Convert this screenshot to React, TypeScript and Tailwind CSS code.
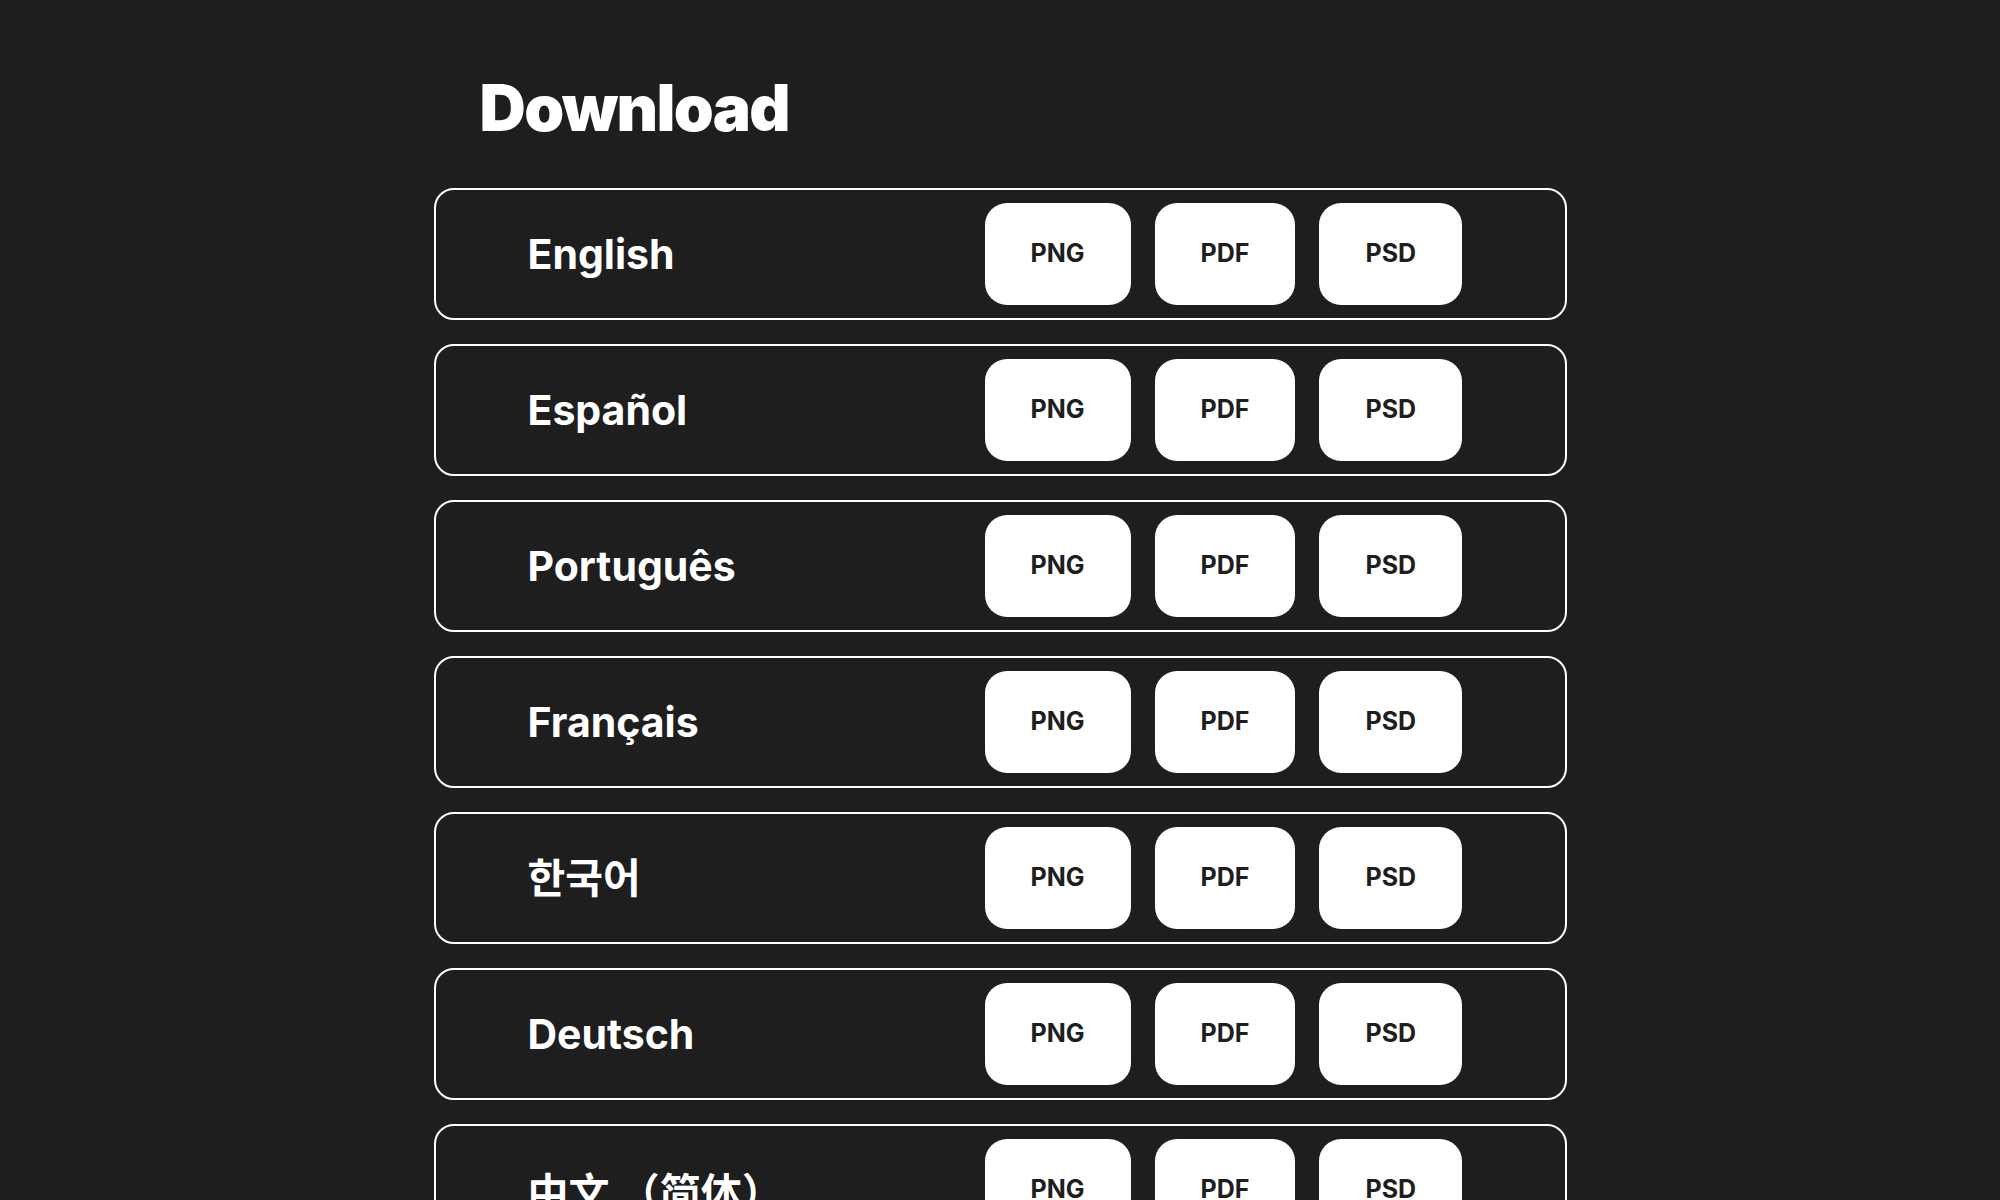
import React from "react";

const langs = ["English", "Español", "Português", "Français", "한국어", "Deutsch", "中文 （简体）", "日本語"];
const formats = ["PNG", "PDF", "PSD"];

export default function App() {
  return (
    <div
      className="min-h-screen w-full bg-[#1e1e1e] text-white"
      style={{ fontFamily: "Inter, 'Noto Sans CJK KR', 'Noto Sans CJK SC', sans-serif" }}
    >
      <div className="mx-auto w-[1133px] pt-[76px]">
        <h1 className="pl-[46px] text-[64px] font-black leading-none tracking-[-0.025em]">Download</h1>
        <div className="mt-[48px] flex flex-col gap-[24px]">
          {langs.map((l) => (
            <div
              key={l}
              className="flex h-[132px] items-center rounded-[20px] border-2 border-white pl-[92px]"
            >
              <div
                className={
                  l.startsWith("中")
                    ? "w-[457px] font-['Noto_Sans_CJK_SC',sans-serif] text-[41px] font-bold leading-none"
                    : "w-[457px] text-[41px] font-bold leading-none"
                }
              >
                {l}
              </div>
              <div className="flex gap-6">
                {formats.map((f) => (
                  <button
                    key={f}
                    className="flex h-[102px] items-center justify-center rounded-[22px] bg-white px-[46px] text-[25px] font-bold text-[#1e1e1e]"
                  >
                    {f}
                  </button>
                ))}
              </div>
            </div>
          ))}
        </div>
      </div>
    </div>
  );
}
